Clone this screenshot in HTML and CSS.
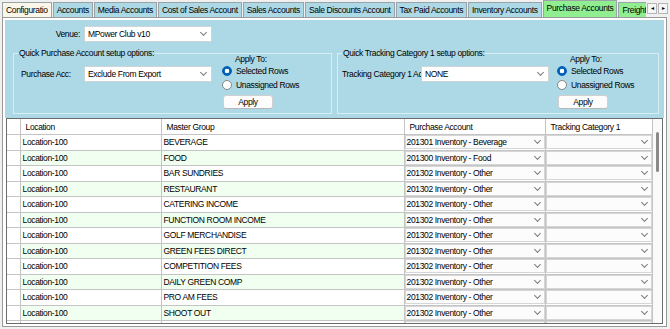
FILE: index.html
```html
<!DOCTYPE html>
<html lang="en">
<head>
  <meta charset="UTF-8">
  <title>Purchase Accounts</title>
  <link rel="stylesheet" href="styles.css">
</head>
<body>

<div class="tabstrip">
  <div class="tabs">
    <div class="tab first">Configuratio</div>
    <div class="tab">Accounts</div>
    <div class="tab">Media Accounts</div>
    <div class="tab">Cost of Sales Account</div>
    <div class="tab">Sales Accounts</div>
    <div class="tab">Sale Discounts Account</div>
    <div class="tab">Tax Paid Accounts</div>
    <div class="tab">Inventory Accounts</div>
    <div class="tab green active">Purchase Accounts</div>
    <div class="tab green">Freight Accounts</div>
  </div>
  <div class="tab-arrows">
    <div class="arrow">&#9666;</div>
    <div class="arrow">&#9656;</div>
  </div>
</div>

<div class="page">
  <div class="panel">
    <div class="venue-row">
      <span class="venue-label">Venue:</span>
      <div class="combo"><span>MPower Club v10</span><i class="chev"></i></div>
    </div>

    <div class="groups">
      <fieldset class="group group-purchase">
        <legend>Quick Purchase Account setup options:</legend>
        <div class="group-body">
          <span class="field-label">Purchase Acc:</span>
          <div class="combo combo-inline"><span>Exclude From Export</span><i class="chev"></i></div>
          <div class="apply-col">
            <div class="apply-to">Apply To:</div>
            <div class="radio"><span class="dot on"></span>Selected Rows</div>
            <div class="radio"><span class="dot"></span>Unassigned Rows</div>
            <button class="btn">Apply</button>
          </div>
        </div>
      </fieldset>

      <fieldset class="group group-tracking">
        <legend>Quick Tracking Category 1 setup options:</legend>
        <div class="group-body">
          <span class="field-label">Tracking Category 1 Account:</span>
          <div class="combo combo-inline"><span>NONE</span><i class="chev"></i></div>
          <div class="apply-col">
            <div class="apply-to">Apply To:</div>
            <div class="radio"><span class="dot on"></span>Selected Rows</div>
            <div class="radio"><span class="dot"></span>Unassigned Rows</div>
            <button class="btn">Apply</button>
          </div>
        </div>
      </fieldset>
    </div>
  </div>

  <div class="grid-box">
    <table class="grid">
      <colgroup>
        <col class="c-rh">
        <col class="c-loc">
        <col class="c-grp">
        <col class="c-acc">
        <col class="c-trk">
      </colgroup>
      <thead>
        <tr>
          <th></th>
          <th>Location</th>
          <th>Master Group</th>
          <th>Purchase Account</th>
          <th>Tracking Category 1</th>
        </tr>
      </thead>
      <tbody>
        <tr>
          <td class="rh"></td><td>Location-100</td><td>BEVERAGE</td>
          <td class="cb"><div class="cell-combo"><span>201301 Inventory - Beverage</span><i class="chev"></i></div></td>
          <td class="cb"><div class="cell-combo"><span></span><i class="chev"></i></div></td>
        </tr>
        <tr class="alt">
          <td class="rh"></td><td>Location-100</td><td>FOOD</td>
          <td class="cb"><div class="cell-combo"><span>201300 Inventory - Food</span><i class="chev"></i></div></td>
          <td class="cb"><div class="cell-combo"><span></span><i class="chev"></i></div></td>
        </tr>
        <tr>
          <td class="rh"></td><td>Location-100</td><td>BAR SUNDRIES</td>
          <td class="cb"><div class="cell-combo"><span>201302 Inventory - Other</span><i class="chev"></i></div></td>
          <td class="cb"><div class="cell-combo"><span></span><i class="chev"></i></div></td>
        </tr>
        <tr class="alt">
          <td class="rh"></td><td>Location-100</td><td>RESTAURANT</td>
          <td class="cb"><div class="cell-combo"><span>201302 Inventory - Other</span><i class="chev"></i></div></td>
          <td class="cb"><div class="cell-combo"><span></span><i class="chev"></i></div></td>
        </tr>
        <tr>
          <td class="rh"></td><td>Location-100</td><td>CATERING INCOME</td>
          <td class="cb"><div class="cell-combo"><span>201302 Inventory - Other</span><i class="chev"></i></div></td>
          <td class="cb"><div class="cell-combo"><span></span><i class="chev"></i></div></td>
        </tr>
        <tr class="alt">
          <td class="rh"></td><td>Location-100</td><td>FUNCTION ROOM INCOME</td>
          <td class="cb"><div class="cell-combo"><span>201302 Inventory - Other</span><i class="chev"></i></div></td>
          <td class="cb"><div class="cell-combo"><span></span><i class="chev"></i></div></td>
        </tr>
        <tr>
          <td class="rh"></td><td>Location-100</td><td>GOLF MERCHANDISE</td>
          <td class="cb"><div class="cell-combo"><span>201302 Inventory - Other</span><i class="chev"></i></div></td>
          <td class="cb"><div class="cell-combo"><span></span><i class="chev"></i></div></td>
        </tr>
        <tr class="alt">
          <td class="rh"></td><td>Location-100</td><td>GREEN FEES DIRECT</td>
          <td class="cb"><div class="cell-combo"><span>201302 Inventory - Other</span><i class="chev"></i></div></td>
          <td class="cb"><div class="cell-combo"><span></span><i class="chev"></i></div></td>
        </tr>
        <tr>
          <td class="rh"></td><td>Location-100</td><td>COMPETITION FEES</td>
          <td class="cb"><div class="cell-combo"><span>201302 Inventory - Other</span><i class="chev"></i></div></td>
          <td class="cb"><div class="cell-combo"><span></span><i class="chev"></i></div></td>
        </tr>
        <tr class="alt">
          <td class="rh"></td><td>Location-100</td><td>DAILY GREEN COMP</td>
          <td class="cb"><div class="cell-combo"><span>201302 Inventory - Other</span><i class="chev"></i></div></td>
          <td class="cb"><div class="cell-combo"><span></span><i class="chev"></i></div></td>
        </tr>
        <tr>
          <td class="rh"></td><td>Location-100</td><td>PRO AM FEES</td>
          <td class="cb"><div class="cell-combo"><span>201302 Inventory - Other</span><i class="chev"></i></div></td>
          <td class="cb"><div class="cell-combo"><span></span><i class="chev"></i></div></td>
        </tr>
        <tr class="alt">
          <td class="rh"></td><td>Location-100</td><td>SHOOT OUT</td>
          <td class="cb"><div class="cell-combo"><span>201302 Inventory - Other</span><i class="chev"></i></div></td>
          <td class="cb"><div class="cell-combo"><span></span><i class="chev"></i></div></td>
        </tr>
        <tr>
          <td class="rh"></td><td></td><td></td>
          <td class="cb"><div class="cell-combo"><span></span><i class="chev"></i></div></td>
          <td class="cb"><div class="cell-combo"><span></span><i class="chev"></i></div></td>
        </tr>
      </tbody>
    </table>
    <div class="vscroll"><div class="thumb"></div></div>
  </div>
</div>

</body>
</html>
```

FILE: styles.css
```css
body {
  margin: 0;
  width: 670px;
  height: 329px;
  overflow: hidden;
  background: #f0f0f0;
  font-family: "Liberation Sans", Arial, sans-serif;
  font-size: 8.5px;
  letter-spacing: -0.35px;
  color: #000;
}

/* tab strip */
.tabstrip {
  display: flex;
  height: 17px;
  padding-left: 2px;
}
.tabs {
  display: flex;
  align-items: flex-end;
  flex: 1;
  overflow: hidden;
}
.tab {
  flex: none;
  height: 15px;
  line-height: 14px;
  padding: 0 3px;
  margin-right: 1px;
  box-sizing: border-box;
  background: #add8e6;
  border: 1px solid #9aa4a8;
  border-bottom: none;
  white-space: nowrap;
}
.tab.first {
  background: #faf6ea;
}
.tab.green {
  background: #90ee90;
}
.tab.active {
  height: 17px;
  line-height: 15px;
}
.tab-arrows {
  display: flex;
  gap: 1px;
  margin: 3px 2px 0 1px;
}
.arrow {
  width: 10px;
  height: 11px;
  box-sizing: border-box;
  border: 1px solid #b5b5b5;
  background: #f6f6f6;
  font-size: 6px;
  letter-spacing: 0;
  line-height: 9px;
  text-align: center;
}

/* tab page */
.page {
  margin-left: 2px;
  width: 665px;
  height: 310px;
  box-sizing: border-box;
  border: 1px solid #9a9a9a;
  background: #fff;
  padding: 2px;
  display: flex;
  flex-direction: column;
}
.panel {
  flex: none;
  height: 98px;
  box-sizing: border-box;
  background: #add8e6;
  padding: 6px 0 0 8px;
}
.venue-row {
  display: flex;
  align-items: center;
  gap: 4px;
  height: 16px;
  padding-left: 40px;
}
.venue-label {
  width: 27px;
  text-align: right;
}
.combo {
  width: 128px;
  height: 16px;
  box-sizing: border-box;
  display: flex;
  align-items: center;
  justify-content: space-between;
  padding: 0 5px 0 3px;
  background: #fff;
  border: 1px solid #cdd5d8;
}
.chev {
  width: 4px;
  height: 4px;
  margin-top: -3px;
  border-right: 1px solid #7a7a7a;
  border-bottom: 1px solid #7a7a7a;
  transform: rotate(45deg);
}

/* group boxes */
.groups {
  display: flex;
  gap: 5px;
  margin-top: 6px;
}
.group {
  margin: 0;
  padding: 0 0 3px 0;
  min-width: 0;
  height: 66px;
  box-sizing: border-box;
  border: 1px solid #d8eef5;
}
.group-purchase {
  width: 319px;
}
.group-tracking {
  width: 322px;
}
.group legend {
  padding: 0 1px;
  margin-left: 4px;
  line-height: 10px;
}
.group-body {
  display: flex;
  align-items: flex-start;
  padding-left: 7px;
}
.group-tracking .group-body {
  padding-left: 4px;
}
.field-label {
  width: 63px;
  margin-top: 11px;
  white-space: nowrap;
  overflow: hidden;
}
.group-tracking .field-label {
  width: 79px;
}
.combo-inline {
  margin-top: 8px;
}
.apply-col {
  margin-left: 10px;
  margin-top: -3px;
}
.group-tracking .apply-col {
  margin-left: 8px;
}
.apply-to {
  padding-left: 13px;
  line-height: 9px;
}
.radio {
  display: flex;
  align-items: center;
  gap: 4px;
  height: 14px;
}
.dot {
  width: 10px;
  height: 10px;
  box-sizing: border-box;
  border-radius: 50%;
  border: 1px solid #858585;
  background: #fff;
}
.dot.on {
  border-color: #005fb8;
  background: radial-gradient(circle, #fff 0 2px, #005fb8 2.6px);
}
.btn {
  display: block;
  margin: 3px 0 0 1px;
  width: 50px;
  height: 14px;
  padding: 0;
  font: inherit;
  letter-spacing: inherit;
  background: #fdfdfd;
  border: 1px solid #d0d0d0;
  border-bottom-color: #b8b8b8;
  border-radius: 3px;
}

/* data grid */
.grid-box {
  flex: 1;
  display: flex;
  margin: 0 1px;
  overflow: hidden;
  border: 1px solid #6b6b6b;
  background: #fff;
}
.grid {
  flex: none;
  align-self: flex-start;
  width: 645px;
  table-layout: fixed;
  border-collapse: collapse;
}
.c-rh { width: 13px; }
.c-loc { width: 141px; }
.c-grp { width: 243px; }
.c-acc { width: 141px; }
.c-trk { width: 107px; }

.grid th,
.grid td {
  border: 1px solid #c4c4c4;
  padding: 0 2px;
  white-space: nowrap;
  overflow: hidden;
  text-align: left;
  font-weight: normal;
  line-height: 10px;
}
.grid th {
  height: 15px;
  padding-left: 5px;
  border-top: none;
}
.grid td {
  height: 14.5px;
}
.grid tr > :first-child {
  border-left: none;
}
.grid tr.alt td {
  background: #f0fff0;
}
.grid td.rh,
.grid tr.alt td.rh {
  background: #fff;
}
.grid td.cb,
.grid tr.alt td.cb {
  padding: 0;
  background: #fff;
}
.cell-combo {
  display: flex;
  align-items: center;
  height: 14px;
  box-sizing: border-box;
  border: 1px solid #d6d6d6;
  background: #fcfcfc;
}
.cell-combo span {
  flex: 1;
  padding-left: 1px;
  overflow: hidden;
}
.cell-combo .chev {
  flex: none;
  margin: -3px 4px 0 5px;
}
.vscroll {
  flex: 1;
  background: #fafafa;
}
.thumb {
  width: 3px;
  height: 40px;
  margin: 13px auto 0;
  border-radius: 2px;
  background: #8a8a8a;
}
```
